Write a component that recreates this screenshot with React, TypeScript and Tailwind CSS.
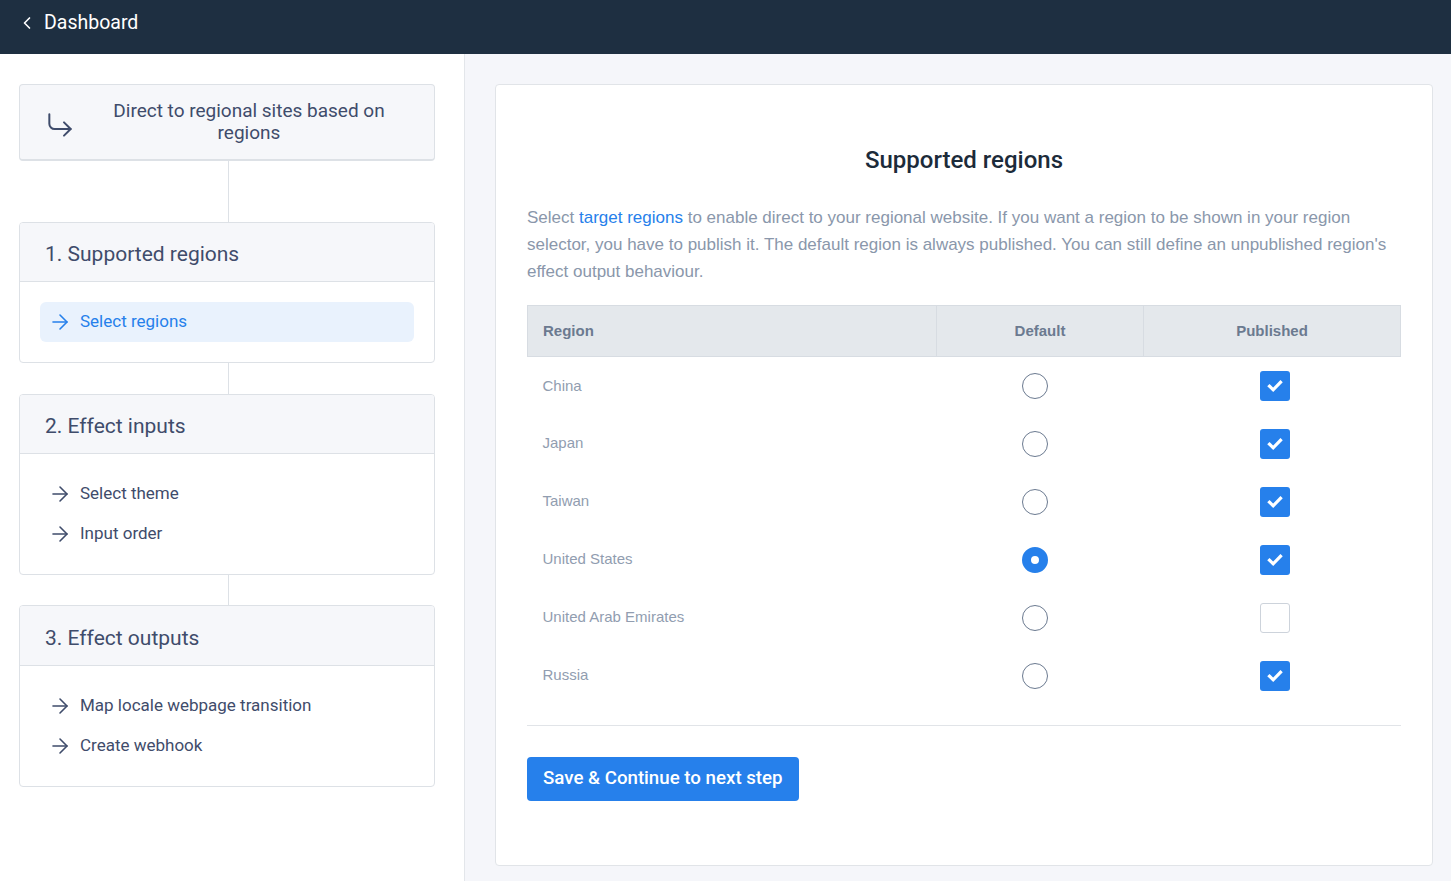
import React from 'react';
import { ChevronLeft, ArrowRight, CornerDownRight } from 'lucide-react';

type Region = { name: string; isDefault: boolean; published: boolean };

const regions: Region[] = [
  { name: 'China', isDefault: false, published: true },
  { name: 'Japan', isDefault: false, published: true },
  { name: 'Taiwan', isDefault: false, published: true },
  { name: 'United States', isDefault: true, published: true },
  { name: 'United Arab Emirates', isDefault: false, published: false },
  { name: 'Russia', isDefault: false, published: true },
];

const font = { fontFamily: '"Liberation Sans", Arial, sans-serif' };
const roboto = { fontFamily: 'Roboto, "Liberation Sans", Arial, sans-serif' };

const StepItem: React.FC<{ label: string; active?: boolean }> = ({ label, active }) => (
  <div
    className={`h-10 flex items-center gap-2 pl-2 rounded-md text-[17px] ${
      active ? 'bg-[#e9f2fd] text-[#2680eb]' : 'text-[#3f4c6b]'
    }`}
    style={roboto}
  >
    <ArrowRight className="w-6 h-6" strokeWidth={1.6} />
    <span>{label}</span>
  </div>
);

const StepCard: React.FC<{
  title: string;
  items: { label: string; active?: boolean }[];
  tall?: boolean;
}> = ({ title, items, tall }) => (
  <div className="border border-[#dde1e6] rounded-[4px] bg-white overflow-hidden">
    <div
      className={`${tall ? 'h-[60px]' : 'h-[59px]'} bg-[#f6f7fa] border-b border-[#dde1e6] flex items-center pt-[6px] pl-[25px] text-[21px] text-[#3f4c6b]`}
      style={roboto}
    >
      {title}
    </div>
    <div className="px-5 py-5">
      {items.map((it) => (
        <StepItem key={it.label} label={it.label} active={it.active} />
      ))}
    </div>
  </div>
);

const Connector: React.FC<{ h: string }> = ({ h }) => (
  <div className={`${h} flex justify-center`}>
    <div className="w-px h-full bg-[#dde1e6] ml-[3px]" />
  </div>
);

const Radio: React.FC<{ checked: boolean }> = ({ checked }) =>
  checked ? (
    <div className="w-[26px] h-[26px] rounded-full border-[9px] border-[#2680eb] bg-white mr-[10px]" />
  ) : (
    <div className="w-[26px] h-[26px] rounded-full border-[1.5px] border-[#6b7a90] bg-white mr-[10px]" />
  );

const Checkbox: React.FC<{ checked: boolean }> = ({ checked }) =>
  checked ? (
    <div className="w-[30px] h-[30px] rounded-[3px] bg-[#2680eb] flex items-center justify-center ml-[6px]">
      <svg width="18" height="18" viewBox="0 0 18 18" fill="none">
        <path d="M3.5 9.2 L7.2 12.8 L14.5 5.2" stroke="white" strokeWidth="3.2" strokeLinecap="square" />
      </svg>
    </div>
  ) : (
    <div className="w-[30px] h-[30px] rounded-[3px] border border-[#cdd3db] bg-white ml-[6px]" />
  );

export default function App() {
  return (
    <div className="h-[881px] flex flex-col bg-white" style={font}>
      <header className="h-[54px] bg-[#1e2f41] flex items-center pb-[8px] pl-[17px] gap-[7px] text-white">
        <ChevronLeft className="w-5 h-5" strokeWidth={2} />
        <span className="text-[19.5px]" style={roboto}>
          Dashboard
        </span>
      </header>

      <div className="flex-1 flex min-h-0">
        <aside className="w-[465px] border-r border-[#e3e6ea] bg-white pt-[30px] pl-[19px] pr-[29px]">
          <div className="h-[77px] border border-[#dde1e6] border-b-2 rounded-[4px] bg-[#f6f7fa] flex items-center pl-6 pr-7">
            <CornerDownRight className="w-8 h-8 text-[#3f4c6b] mt-[5px]" strokeWidth={1.5} />
            <div
              className="flex-1 text-center text-[19px] leading-[22px] text-[#3f4c6b] pl-4"
              style={roboto}
            >
              Direct to regional sites based on
              <br />
              regions
            </div>
          </div>
          <Connector h="h-[61px]" />
          <StepCard title="1. Supported regions" items={[{ label: 'Select regions', active: true }]} />
          <Connector h="h-[31px]" />
          <StepCard
            title="2. Effect inputs"
            items={[{ label: 'Select theme' }, { label: 'Input order' }]}
          />
          <Connector h="h-[30px]" />
          <StepCard
            tall
            title="3. Effect outputs"
            items={[{ label: 'Map locale webpage transition' }, { label: 'Create webhook' }]}
          />
        </aside>

        <main className="flex-1 bg-[#f5f6fa] pt-[30px] pb-[15px] pl-[30px] pr-[18px] flex">
          <section className="flex-1 bg-white border border-[#e1e4e8] rounded-[4px] px-[31px] pt-[61px]">
            <h2
              className="text-center text-[24px] leading-[28px] font-medium text-[#1c2b3a]"
              style={roboto}
            >
              Supported regions
            </h2>
            <p className="mt-[30px] text-[17px] leading-[27px] text-[#8a97ab]">
              Select <span className="text-[#2680eb]">target regions</span> to enable direct to
              your regional website. If you want a region to be shown in your region selector, you
              have to publish it. The default region is always published. You can still define an
              unpublished region's effect output behaviour.
            </p>

            <table className="mt-[20px] w-full border-collapse">
              <thead>
                <tr className="bg-[#e4e8ec] h-[51px] text-[15px] font-bold text-[#6b7a90]">
                  <th className="border border-[#d7dce2] text-left pl-[15px] w-[409px]">Region</th>
                  <th className="border border-[#d7dce2] text-center w-[207px]">Default</th>
                  <th className="border border-[#d7dce2] text-center">Published</th>
                </tr>
              </thead>
              <tbody>
                {regions.map((r) => (
                  <tr key={r.name} className="h-[58px]">
                    <td className="pl-[15px] text-[15px] text-[#919db0]">{r.name}</td>
                    <td>
                      <div className="flex justify-center">
                        <Radio checked={r.isDefault} />
                      </div>
                    </td>
                    <td>
                      <div className="flex justify-center">
                        <Checkbox checked={r.published} />
                      </div>
                    </td>
                  </tr>
                ))}
              </tbody>
            </table>

            <div className="mt-[20px] border-t border-[#e1e4e8]" />

            <button
              className="mt-[31px] h-[44px] px-4 rounded-[4px] bg-[#2680eb] text-white text-[18.7px] font-medium"
              style={roboto}
            >
              Save &amp; Continue to next step
            </button>
          </section>
        </main>
      </div>
    </div>
  );
}
